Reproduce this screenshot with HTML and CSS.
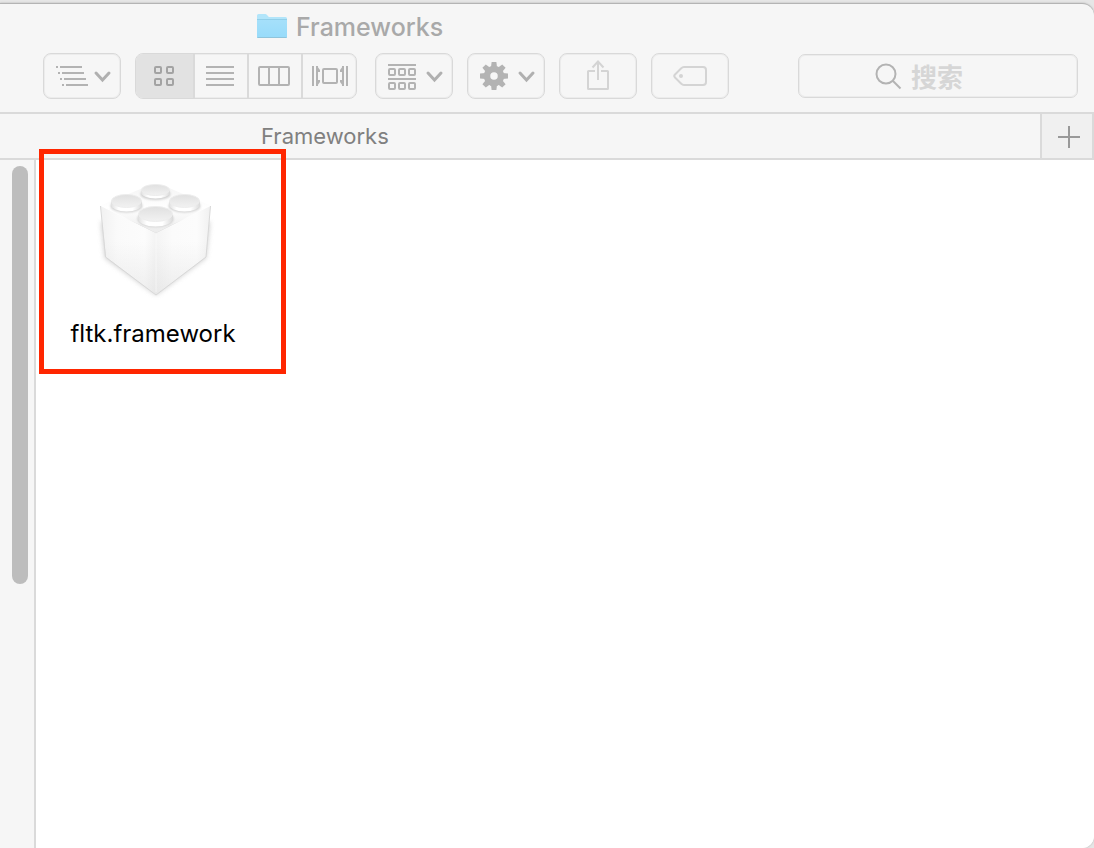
FILE: index.html
```html
<!DOCTYPE html>
<html lang="zh-CN">
<head>
<meta charset="utf-8">
<title>Frameworks</title>
<link rel="stylesheet" href="styles.css">
</head>
<body>
<div class="window">
  <header class="titlebar">
    <h1 class="title">
      <svg class="folder" viewBox="256 13 32 27" aria-hidden="true">
        <defs><linearGradient id="folder-fill" x1="0" y1="0" x2="0" y2="1"><stop offset="0" stop-color="#a6e0fa"/><stop offset="1" stop-color="#97dbfa"/></linearGradient></defs>
        <path d="M257 37V15.500q0-1.500 1.500-1.500h7q1 0 2 1.500t2 1.500h16q1.500 0 1.500 1.500V37q0 1-1 1h-28q-1 0-1-1z" fill="#b2e5fa"/>
        <path d="M257 19h30v18q0 1-1 1h-28q-1 0-1-1z" fill="url(#folder-fill)"/>
        <path d="M257 19.500h30" stroke="#92cfe9" fill="none"/>
        <path d="M257.500 37.500h29" stroke="#8fc4db" fill="none"/>
      </svg>
      <span>Frameworks</span>
    </h1>
    <div class="toolbar">
      <button class="tool" type="button" aria-label="Path">
        <svg viewBox="44 54 76 44"><path class="line" d="M56 67h2m2 0h22M58 73h2m2 0h22M60 79h2m2 0h22M62 85h2m2 0h22"/><path class="chevron" d="M96 73l6.500 7 6.500-7"/></svg>
      </button>
      <div class="segments">
        <button class="segment segment-active" type="button" aria-label="Icons" aria-pressed="true">
          <svg viewBox="136 54 57 44"><g class="line dark"><rect x="155" y="67" width="6" height="6" rx="1"/><rect x="167" y="67" width="6" height="6" rx="1"/><rect x="155" y="79" width="6" height="6" rx="1"/><rect x="167" y="79" width="6" height="6" rx="1"/></g></svg>
        </button>
        <button class="segment" type="button" aria-label="List">
          <svg viewBox="195 54 52 44"><path class="line" d="M206 67h28M206 73h28M206 79h28M206 85h28"/></svg>
        </button>
        <button class="segment" type="button" aria-label="Columns">
          <svg viewBox="249 54 52 44"><path class="line" d="M269 67v18M279 67v18"/><rect class="line" x="259" y="67" width="30" height="18" rx="1"/></svg>
        </button>
        <button class="segment" type="button" aria-label="Cover Flow">
          <svg viewBox="303 54 53 44"><path class="line" d="M313 66v20M347 66v20"/><rect class="line" x="323" y="69" width="14" height="14" rx="1"/><path class="line" d="M317 66v20M343 66v20"/><path d="M317 66l3 4v2h-3zM317 86l3-4v-2h-3zM343 66l-3 4v2h3zM343 86l-3-4v-2h3z" fill="#b3b3b3"/></svg>
        </button>
      </div>
      <button class="tool group-tool" type="button" aria-label="Group">
        <svg viewBox="376 54 76 44"><path class="line" d="M388 65h28M388 79h28"/><g class="line"><rect x="389" y="69" width="6" height="6" rx="1"/><rect x="399" y="69" width="6" height="6" rx="1"/><rect x="409" y="69" width="6" height="6" rx="1"/><rect x="389" y="83" width="6" height="6" rx="1"/><rect x="399" y="83" width="6" height="6" rx="1"/><rect x="409" y="83" width="6" height="6" rx="1"/></g><path class="chevron" d="M428 73l6.500 7 6.500-7"/></svg>
      </button>
      <button class="tool" type="button" aria-label="Action">
        <svg viewBox="468 54 76 44">
          <g transform="translate(494 76)"><circle r="7" fill="none" stroke="#b3b3b3" stroke-width="6.500"/><g fill="#b3b3b3"><path id="tooth" d="M-3-8.500l.6-5.500h4.800l.6 5.500z"/><use href="#tooth" transform="rotate(45)"/><use href="#tooth" transform="rotate(90)"/><use href="#tooth" transform="rotate(135)"/><use href="#tooth" transform="rotate(180)"/><use href="#tooth" transform="rotate(225)"/><use href="#tooth" transform="rotate(270)"/><use href="#tooth" transform="rotate(315)"/></g></g>
          <path class="chevron" d="M520 73l6.500 7 6.500-7"/>
        </svg>
      </button>
      <button class="tool" type="button" aria-label="Share" disabled>
        <svg viewBox="560 54 76 44"><path class="line faint" d="M595 71h-6.500q-.5 0-.5.500V88.500q0 .5.500.5h19q.5 0 .5-.5V71.500q0-.5-.5-.5H601M598 80V61.500M592.500 67.500l5.500-6 5.500 6"/></svg>
      </button>
      <button class="tool" type="button" aria-label="Tags" disabled>
        <svg viewBox="652 54 76 44"><path class="line faint" d="M684 67h19q3 0 3 3v12q0 3-3 3h-19q-1.500 0-3-1.500l-6-6q-1.500-1.500 0-3l6-6q1.500-1.500 3-1.500z"/><circle cx="681" cy="76" r="2" fill="#d4d4d4"/></svg>
      </button>
      <label class="search">
        <svg class="search-icon" viewBox="875 64 27 27" aria-hidden="true"><circle class="line" cx="886" cy="75" r="9.500"/><path class="line" d="M892.500 81.500l8 8"/></svg>
        <input class="search-input" type="search" placeholder="搜索" aria-label="搜索">
      </label>
    </div>
  </header>
  <nav class="tabs">
    <a class="tab" href="#files">Frameworks</a>
    <button class="add-tab" type="button" aria-label="New tab"><svg viewBox="0 0 22 22"><path d="M0 11h22M11 0v22" fill="none" stroke="#999" stroke-width="2"/></svg></button>
  </nav>
  <div class="body">
    <aside class="sidebar"><div class="thumb"></div></aside>
    <main class="files" id="files">
      <figure class="file">
        <svg class="brick" viewBox="89 176 126 126" aria-hidden="true">
          <defs>
            <linearGradient id="left" x1="0" y1="0" x2="1" y2="0"><stop offset="0" stop-color="#f1f1f1"/><stop offset=".3" stop-color="#fafafa"/><stop offset=".8" stop-color="#fcfcfc"/><stop offset="1" stop-color="#f3f3f3"/></linearGradient>
            <linearGradient id="right" x1="0" y1="0" x2="1" y2="0"><stop offset="0" stop-color="#f4f4f4"/><stop offset=".3" stop-color="#fbfbfb"/><stop offset=".75" stop-color="#fcfcfc"/><stop offset="1" stop-color="#f0f0f0"/></linearGradient>
            <linearGradient id="base" x1="0" y1="0" x2="0" y2="1"><stop offset=".4" stop-color="#ccc" stop-opacity="0"/><stop offset="1" stop-color="#ccc" stop-opacity=".3"/></linearGradient>
            <linearGradient id="top" x1="0" y1="0" x2="0" y2="1"><stop offset="0" stop-color="#f4f4f4"/><stop offset=".45" stop-color="#fff"/><stop offset="1" stop-color="#ebebeb"/></linearGradient>
            <linearGradient id="stud" x1="0" y1="0" x2="0" y2="1"><stop offset="0" stop-color="#e0e0e0"/><stop offset="1" stop-color="#f2f2f2"/></linearGradient>
            <linearGradient id="rim" x1="0" y1="0" x2="1" y2="0"><stop offset="0" stop-color="#e0e0e0"/><stop offset=".25" stop-color="#fff"/><stop offset=".7" stop-color="#fff"/><stop offset="1" stop-color="#dadada"/></linearGradient>
            <filter id="soft" x="-20%" y="-20%" width="140%" height="140%"><feGaussianBlur stdDeviation="2.500"/></filter>
            <filter id="slight" x="-20%" y="-30%" width="140%" height="160%"><feGaussianBlur stdDeviation="1"/></filter>
          </defs>
          <path d="M100 222l4 36 51 37 50-37 4-36z" fill="#bbb" filter="url(#soft)" opacity=".7"/>
          <path d="M99.500 206l55.500 27v62l-50-38z" fill="url(#left)"/>
          <path d="M209.500 206L155 233v62l50-38z" fill="url(#right)"/>
          <path d="M99.500 206l55.500 27 54.500-27-4.500 51-50 38-50-38z" fill="url(#base)"/>
          <path d="M99.500 205.500L142 188q13-4 26 0l41.500 17.500L155 233z" fill="url(#top)"/>
          <path d="M99.500 206l5 51 50.500 38 50-38 4.500-51" fill="none" stroke="#d8d8d8" stroke-width="1"/>
          <path d="M155 234v58" stroke="#fff" opacity=".5"/>
          <g fill="#cfcfcf" filter="url(#slight)"><ellipse cx="154.500" cy="194" rx="15" ry="6"/><ellipse cx="125.500" cy="206" rx="16" ry="6.500"/><ellipse cx="183.500" cy="206" rx="16" ry="6.500"/><ellipse cx="154.500" cy="219" rx="18" ry="8"/></g>
          <g fill="url(#rim)">
            <path d="M140 190v2.500a14.500 6 0 0 0 29 0V190z"/><path d="M110 201v3.500a15.500 7 0 0 0 31 0V201z"/><path d="M168 201v3.500a15.500 7 0 0 0 31 0V201z"/><path d="M137 215v3.500a17.500 8 0 0 0 35 0V215z"/>
          </g>
          <g fill="url(#stud)" stroke="#ededed"><ellipse cx="154.500" cy="190" rx="14" ry="5.500"/><ellipse cx="125.500" cy="201" rx="15" ry="6.500"/><ellipse cx="183.500" cy="201" rx="15" ry="6.500"/><ellipse cx="154.500" cy="214" rx="17" ry="7.500"/></g>
        </svg>
        <figcaption class="file-name">fltk.framework</figcaption>
        <span class="highlight"></span>
      </figure>
    </main>
  </div>
</div>
</body>
</html>
```
FILE: styles.css
```css
* { box-sizing: border-box; }

body {
  margin: 0;
  background: #e6e6e6;
  font-family: Inter, "Liberation Sans", "Noto Sans CJK SC", sans-serif;
}

button {
  margin: 0;
  padding: 0;
  font: inherit;
  background: transparent;
}

svg { display: block; }

.window {
  display: flex;
  flex-direction: column;
  min-height: calc(100vh - 3px);
  margin-top: 3px;
  overflow: hidden;
  background: #f6f6f6;
  border-top: 1px solid #b4b4b4;
  border-radius: 0 12px 12px 0;
  box-shadow: 0 0 2px #aaa;
}

.titlebar {
  padding: 0 16px 13px 43px;
  border-bottom: 2px solid #dadada;
}

.title {
  display: flex;
  align-items: center;
  gap: 8px;
  height: 45px;
  margin: 0 0 4px 213px;
  color: #a9a9a9;
  font-size: 25px;
  font-weight: 500;
}

.folder { width: 32px; height: 27px; }

.toolbar {
  display: flex;
  align-items: center;
  gap: 14px;
}

.tool {
  width: 78px;
  height: 46px;
  border: 1px solid #d9d9d9;
  border-radius: 8px;
  box-shadow: inset 0 0 0 1px #ececec;
}

.tool svg { width: 76px; height: 44px; }

.group-tool { margin-left: 4px; }

.segments {
  display: flex;
  height: 46px;
  overflow: hidden;
  border: 1px solid #d9d9d9;
  border-radius: 8px;
  box-shadow: inset 0 0 0 1px #ececec;
}

.segment {
  width: 54px;
  border: 0;
  border-right: 2px solid #dadada;
}

.segment svg { width: 100%; height: 44px; }
.segment:last-child { width: 53px; border-right: 0; }
.segment-active { width: 59px; background: #e2e2e2; }

.line { fill: none; stroke: #b3b3b3; stroke-width: 2; }
.dark { stroke: #a3a3a3; }
.faint { stroke: #d4d4d4; }
.chevron { fill: none; stroke: #b0b0b0; stroke-width: 3; stroke-linecap: round; }

.search {
  display: flex;
  align-items: center;
  gap: 9px;
  width: 280px;
  height: 44px;
  margin-left: auto;
  padding: 0 8px 0 76px;
  border: 1px solid #d9d9d9;
  border-radius: 7px;
  box-shadow: inset 0 0 0 1px #ececec;
}

.search-icon { flex: none; width: 27px; height: 27px; }

.search-input {
  flex: 1;
  min-width: 0;
  height: 40px;
  padding: 0 0 2px;
  border: 0;
  outline: 0;
  background: transparent;
  color: #666;
  font: 700 26px "Noto Sans CJK SC", sans-serif;
}

.search-input::placeholder { color: #d6d6d6; }

.tabs {
  display: flex;
  height: 46px;
  border-bottom: 2px solid #dadada;
}

.tab {
  flex: 1;
  padding-left: 261px;
  color: #808080;
  font-size: 22px;
  line-height: 44px;
  text-decoration: none;
}

.add-tab {
  display: flex;
  align-items: center;
  justify-content: center;
  width: 54px;
  padding: 2px 0 0 4px;
  border: solid #dadada;
  border-width: 0 2px;
  background: #f0f0f0;
}

.add-tab svg { width: 22px; height: 22px; }

.body { display: flex; flex: 1; }

.sidebar {
  display: flex;
  flex-direction: column;
  width: 36px;
  padding: 6px 6px 0 12px;
  border-right: 2px solid #dadada;
}

.thumb {
  flex: 19;
  border-radius: 8px;
  background: #bdbdbd;
}

.sidebar::after { flex: 12; content: ""; }

.files {
  flex: 1;
  padding: 16px 35px;
  background: #fff;
}

.file {
  position: relative;
  display: flex;
  flex-direction: column;
  align-items: center;
  gap: 18px;
  width: 164px;
  margin: 0;
}

.brick { width: 126px; height: 126px; }

.file-name {
  color: #000;
  font-size: 24px;
  line-height: 28px;
  white-space: nowrap;
}

.highlight {
  position: absolute;
  inset: -27px -51px -26px -32px;
  border: 5px solid #ff2600;
  pointer-events: none;
}
```
